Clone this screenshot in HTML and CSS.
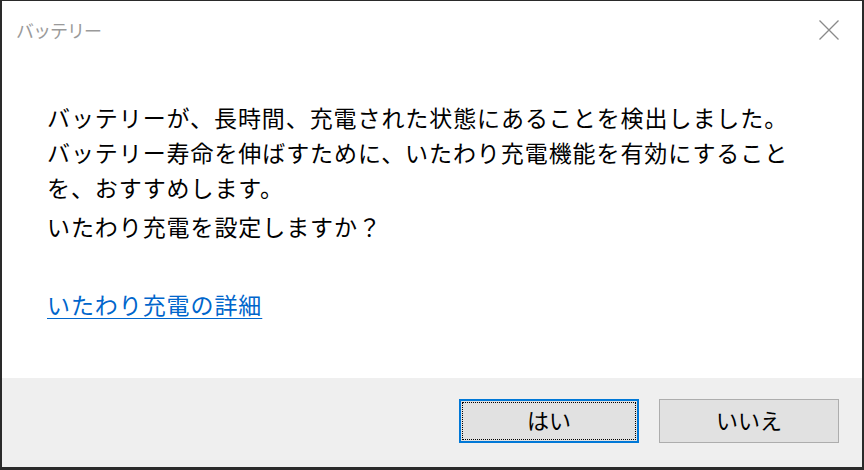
FILE: index.html
```html
<!DOCTYPE html>
<html lang="ja">
<head>
<meta charset="utf-8">
<link rel="stylesheet" href="styles.css">
</head>
<body>
<div class="window">
  <div class="titlebar">
    <span class="title">バッテリー</span>
    <span class="close" aria-label="閉じる">
      <svg width="20" height="20" viewBox="0 0 20 20"><path d="M0.5 0.5 L19.5 19.5 M19.5 0.5 L0.5 19.5" stroke="#8a8a8a" stroke-width="1.3" fill="none"/></svg>
    </span>
  </div>
  <div class="content">
    <p class="message">バッテリーが、長時間、充電された状態にあることを検出しました。<br>バッテリー寿命を伸ばすために、いたわり充電機能を有効にすること<br>を、おすすめします。</p>
    <p class="question">いたわり充電を設定しますか？</p>
    <a class="link" href="#">いたわり充電の詳細</a>
  </div>
  <div class="footer">
    <button class="btn btn-default"><span class="focus">はい</span></button>
    <button class="btn"><span class="label">いいえ</span></button>
  </div>
</div>
</body>
</html>
```
FILE: styles.css
```css
html, body {
  margin: 0;
  padding: 0;
}
body {
  width: 864px;
  height: 470px;
  background: #2a2a2a;
  font-family: "Noto Sans CJK JP", "Noto Sans", sans-serif;
  overflow: hidden;
}
.window {
  margin: 1px 2px 0 2px;
  height: 466px;
  background: #ffffff;
  display: flex;
  flex-direction: column;
}
.titlebar {
  height: 58px;
  display: flex;
  align-items: center;
  justify-content: space-between;
  padding: 0 23px 0 14px;
  flex: none;
}
.title {
  font-size: 18px;
  color: #9a9a9a;
  letter-spacing: -1px;
}
.close {
  display: flex;
  width: 20px;
  height: 20px;
}
.content {
  flex: 1;
  padding: 41px 0 0 45px;
  font-size: 23px;
  letter-spacing: 0.92px;
  color: #000;
}
.message {
  margin: 0;
  line-height: 35px;
}
.question {
  margin: 4px 0 0 0;
  line-height: 35px;
}
.link {
  display: inline-block;
  margin-top: 43px;
  line-height: 35px;
  color: #0066cc;
  text-decoration: underline;
  text-underline-offset: 4px;
  text-decoration-thickness: 1px;
}
.footer {
  flex: none;
  height: 89px;
  background: #efefef;
  display: flex;
  justify-content: flex-end;
  align-items: flex-start;
  gap: 20px;
  padding: 21px 23px 0 0;
  box-sizing: border-box;
}
.btn {
  width: 180px;
  height: 44px;
  background: #e1e1e1;
  border: 1px solid #adadad;
  font-family: "Noto Sans CJK JP", sans-serif;
  font-size: 22px;
  color: #000;
  padding: 0;
  display: flex;
  align-items: center;
  justify-content: center;
}
.label {
  padding-bottom: 4px;
}
.btn-default {
  border: 2px solid #0078d7;
  padding: 1px;
}
.focus {
  flex: 1;
  align-self: stretch;
  display: flex;
  align-items: center;
  justify-content: center;
  border: 1px dotted #000;
  padding-bottom: 4px;
}
```
